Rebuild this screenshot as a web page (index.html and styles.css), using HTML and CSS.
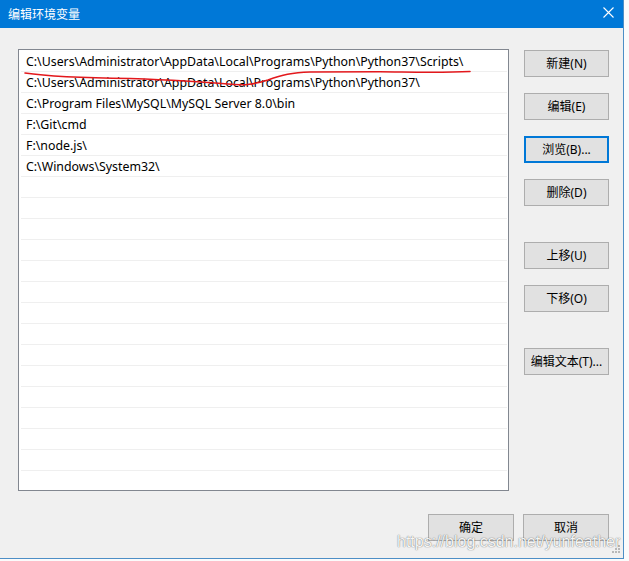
FILE: index.html
```html
<!DOCTYPE html>
<html lang="zh-CN">
<head>
<meta charset="utf-8">
<title>编辑环境变量</title>
<link rel="stylesheet" href="styles.css">
</head>
<body>
<div class="window">
  <div class="titlebar">
    <span class="title">编辑环境变量</span>
    <svg class="close" width="11" height="11" viewBox="0 0 11 11"><path d="M0.5 0.5 L10.5 10.5 M10.5 0.5 L0.5 10.5" stroke="#fff" stroke-width="1.1" fill="none"/></svg>
  </div>
  <div class="content">
    <div class="main">
      <div class="list">
        <div class="row">C:\Users\Administrator\AppData\Local\Programs\Python\Python37\Scripts\</div>
        <div class="row">C:\Users\Administrator\AppData\Local\Programs\Python\Python37\</div>
        <div class="row">C:\Program Files\MySQL\MySQL Server 8.0\bin</div>
        <div class="row">F:\Git\cmd</div>
        <div class="row">F:\node.js\</div>
        <div class="row">C:\Windows\System32\</div>
        <div class="row"></div>
        <div class="row"></div>
        <div class="row"></div>
        <div class="row"></div>
        <div class="row"></div>
        <div class="row"></div>
        <div class="row"></div>
        <div class="row"></div>
        <div class="row"></div>
        <div class="row"></div>
        <div class="row"></div>
        <div class="row"></div>
        <div class="row"></div>
        <div class="row"></div>
      </div>
      <div class="side">
        <button class="btn">新建(N)</button>
        <button class="btn">编辑(E)</button>
        <button class="btn focus">浏览(B)...</button>
        <button class="btn">删除(D)</button>
        <button class="btn group">上移(U)</button>
        <button class="btn">下移(O)</button>
        <button class="btn group">编辑文本(T)...</button>
      </div>
    </div>
    <div class="footer">
      <button class="btn wide">确定</button>
      <button class="btn wide">取消</button>
    </div>
  </div>
</div>
<svg class="scribble" width="629" height="561" viewBox="0 0 629 561">
  <path d="M25 73 C 45 76, 90 78, 130 78.5 C 170 80, 205 82, 228 84 C 245 86, 255 84, 268 80 C 282 75, 292 72.5, 310 72 L 380 71.8 C 410 72, 440 73, 470 71.5" stroke="#e3181c" stroke-width="1.6" fill="none" stroke-linecap="round"/>
</svg>
<svg class="grip" width="9" height="9" viewBox="0 0 9 9">
  <rect x="6" y="0" width="2" height="2" fill="#b8b8b8"/>
  <rect x="3" y="3" width="2" height="2" fill="#b8b8b8"/>
  <rect x="6" y="3" width="2" height="2" fill="#b8b8b8"/>
  <rect x="0" y="6" width="2" height="2" fill="#b8b8b8"/>
  <rect x="3" y="6" width="2" height="2" fill="#b8b8b8"/>
  <rect x="6" y="6" width="2" height="2" fill="#b8b8b8"/>
</svg>
<div class="watermark">https://blog.csdn.net/yunfeather</div>
</body>
</html>
```

FILE: styles.css
```css
html, body {
  margin: 0;
  padding: 0;
}
body {
  width: 629px;
  height: 561px;
  background: #fbfbfb;
  position: relative;
  overflow: hidden;
  font-family: "Noto Sans", "Noto Sans CJK SC", sans-serif;
  font-size: 12px;
  color: #000;
}
.window {
  width: 624px;
  height: 559px;
  box-sizing: border-box;
  background: #f0f0f0;
  border-right: 1px solid #4d8fc6;
  border-bottom: 1px solid #4d8fc6;
  display: flex;
  flex-direction: column;
}
.titlebar {
  height: 28px;
  flex: none;
  background: #0078d7;
  display: flex;
  align-items: center;
  justify-content: space-between;
  padding: 0 9px 0 8px;
}
.title {
  color: #fff;
  font-family: "Noto Sans CJK SC", sans-serif;
  font-size: 12px;
  line-height: 1;
  margin-top: -1px;
}
.close {
  display: block;
  margin-top: -3px;
}
.content {
  flex: 1;
  display: flex;
  flex-direction: column;
  padding: 21px 14px 0 18px;
}
.main {
  display: flex;
  align-items: flex-start;
}
.list {
  width: 491px;
  height: 442px;
  box-sizing: border-box;
  border: 1px solid #828790;
  background: #fff;
  padding-top: 1px;
  overflow: hidden;
}
.row {
  height: 20px;
  margin: 0 1px 0 2px;
  padding-left: 5px;
  border-bottom: 1px solid #efefef;
  line-height: 21px;
  white-space: nowrap;
  font-size: 12.35px;
}
.side {
  margin-left: 15px;
  margin-top: 1px;
  display: flex;
  flex-direction: column;
  gap: 16px;
}
.btn {
  width: 85px;
  height: 27px;
  box-sizing: border-box;
  margin: 0;
  padding: 0;
  background: #e1e1e1;
  border: 1px solid #adadad;
  font-family: "Noto Sans", "Noto Sans CJK SC", sans-serif;
  font-size: 12px;
  color: #000;
  line-height: 1;
}
.btn.focus {
  border: 2px solid #0078d7;
}
.btn.group {
  margin-top: 20px;
}
.footer {
  display: flex;
  justify-content: flex-end;
  gap: 9px;
  padding-top: 23px;
}
.btn.wide {
  width: 86px;
}
.scribble {
  position: absolute;
  left: 0;
  top: 0;
  pointer-events: none;
}
.grip {
  position: absolute;
  left: 612px;
  top: 545px;
}
.watermark {
  position: absolute;
  left: 397px;
  top: 534px;
  font-family: "Liberation Sans", sans-serif;
  font-size: 16px;
  line-height: 16px;
  color: rgba(255, 255, 255, 0.95);
  text-shadow: 0 0 1px rgba(0, 0, 0, 0.6), 0 0 2px rgba(0, 0, 0, 0.15);
  white-space: nowrap;
  pointer-events: none;
}
```
